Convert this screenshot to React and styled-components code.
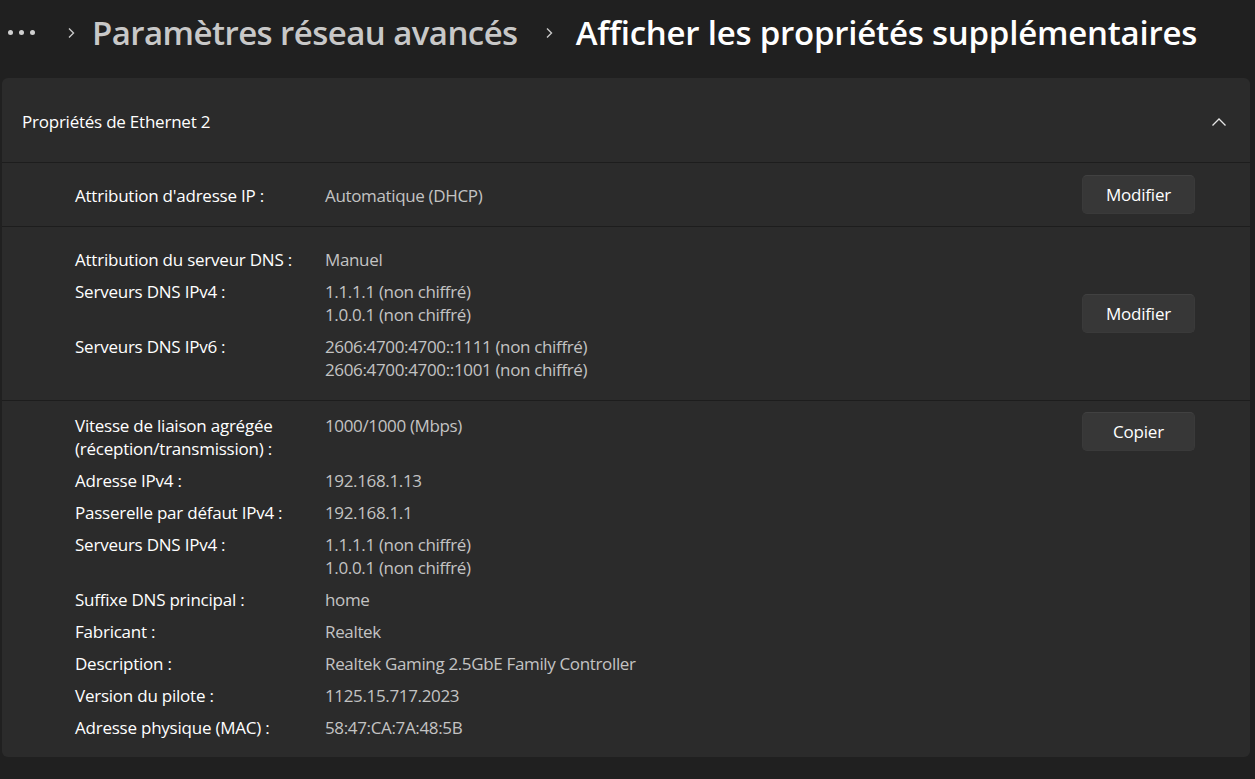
import React from "react";
import styled, { createGlobalStyle } from "styled-components";

const Global = createGlobalStyle`
  html, body { margin: 0; padding: 0; background: #202020; }
  body { font-family: "Open Sans", "Noto Sans", sans-serif; color: #ffffff; }
`;

const Page = styled.div`
  width: 1255px;
  height: 779px;
  background: #202020;
  overflow: hidden;
  display: flex;
  flex-direction: column;
`;

const Breadcrumb = styled.div`
  display: flex;
  align-items: center;
  height: 64px;
  padding: 0 0 0 8px;
  margin-bottom: 14px;
  box-sizing: border-box;
`;

const Dots = styled.div`
  display: flex;
  gap: 6px;
  align-items: center;
  margin-right: 26px;
  span {
    width: 5px;
    height: 5px;
    border-radius: 50%;
    background: #d0d0d0;
  }
`;

const Crumb = styled.span`
  font-size: 33px;
  font-weight: 600;
  letter-spacing: ${(p) => p.$ls}px;
  color: ${(p) => (p.$current ? "#ffffff" : "#c8c8c8")};
  white-space: nowrap;
`;

const Sep = styled.span`
  display: inline-flex;
  align-items: center;
  justify-content: center;
  width: 20px;
  margin: 2px ${(p) => p.$right}px 0 ${(p) => p.$left}px;
`;

const Card = styled.div`
  margin-left: 2px;
  width: 1248px;
  background: #2b2b2b;
  border-radius: 6px;
  display: flex;
  flex-direction: column;
`;

const Header = styled.div`
  height: 85px;
  box-sizing: border-box;
  display: flex;
  align-items: center;
  justify-content: space-between;
  padding: 3px 23px 0 20px;
  font-size: 17px;
  letter-spacing: -0.23px;
  border-bottom: 1px solid #1d1d1d;
`;

const Section = styled.div`
  display: flex;
  align-items: ${(p) => (p.$top ? "flex-start" : "center")};
  justify-content: space-between;
  padding: 0 55px 0 73px;
  border-bottom: ${(p) => (p.$last ? "none" : "1px solid #1d1d1d")};
`;

const Grid = styled.div`
  display: grid;
  grid-template-columns: 250px auto;
  row-gap: 9px;
  padding: ${(p) => p.$pad};
  font-size: 17px;
  line-height: 23px;
  letter-spacing: -0.23px;
`;

const Label = styled.div`
  color: #ffffff;
  width: 232px;
`;

const Value = styled.div`
  color: #c3c3c3;
  letter-spacing: -0.35px;
`;

const Button = styled.button`
  width: 113px;
  height: 39px;
  box-sizing: border-box;
  border-radius: 5px;
  background: #373737;
  border: 1px solid #3a3a3a;
  border-top-color: #414141;
  color: #ffffff;
  font-family: inherit;
  font-size: 17px;
  letter-spacing: -0.2px;
  flex-shrink: 0;
  padding: 0;
  margin-top: ${(p) => p.$mt || 0}px;
`;

const ChevronRight = () => (
  <svg width="10" height="14" viewBox="0 0 10 14">
    <path d="M3 2.5 L7.5 7 L3 11.5" fill="none" stroke="#c8c8c8" strokeWidth="1.4" />
  </svg>
);

const ChevronUp = () => (
  <svg width="16" height="10" viewBox="0 0 16 10">
    <path d="M1.5 8.5 L8 2 L14.5 8.5" fill="none" stroke="#e6e6e6" strokeWidth="1.3" />
  </svg>
);

const rows1 = [["Attribution d'adresse IP :", ["Automatique (DHCP)"]]];
const rows2 = [
  ["Attribution du serveur DNS :", ["Manuel"]],
  ["Serveurs DNS IPv4 :", ["1.1.1.1 (non chiffré)", "1.0.0.1 (non chiffré)"]],
  ["Serveurs DNS IPv6 :", ["2606:4700:4700::1111 (non chiffré)", "2606:4700:4700::1001 (non chiffré)"]],
];
const rows3 = [
  [["Vitesse de liaison agrégée", "(réception/transmission) :"], ["1000/1000 (Mbps)"]],
  ["Adresse IPv4 :", ["192.168.1.13"]],
  ["Passerelle par défaut IPv4 :", ["192.168.1.1"]],
  ["Serveurs DNS IPv4 :", ["1.1.1.1 (non chiffré)", "1.0.0.1 (non chiffré)"]],
  ["Suffixe DNS principal :", ["home"]],
  ["Fabricant :", ["Realtek"]],
  ["Description :", ["Realtek Gaming 2.5GbE Family Controller"]],
  ["Version du pilote :", ["1125.15.717.2023"]],
  ["Adresse physique (MAC) :", ["58:47:CA:7A:48:5B"]],
];

const Rows = ({ rows, pad }) => (
  <Grid $pad={pad}>
    {rows.map(([l, v], i) => (
      <React.Fragment key={i}>
        <Label>
          {Array.isArray(l) ? l.map((x, j) => <div key={j}>{x}</div>) : l}
        </Label>
        <Value>
          {v.map((x, j) => (
            <div key={j}>{x}</div>
          ))}
        </Value>
      </React.Fragment>
    ))}
  </Grid>
);

export default function App() {
  return (
    <Page>
      <Global />
      <Breadcrumb>
        <Dots>
          <span />
          <span />
          <span />
        </Dots>
        <Sep $left={0} $right={11}>
          <ChevronRight />
        </Sep>
        <Crumb $ls={-0.56}>Paramètres réseau avancés</Crumb>
        <Sep $left={21} $right={17}>
          <ChevronRight />
        </Sep>
        <Crumb $current $ls={-0.22}>
          Afficher les propriétés supplémentaires
        </Crumb>
      </Breadcrumb>
      <Card>
        <Header>
          <span>Propriétés de Ethernet 2</span>
          <ChevronUp />
        </Header>
        <Section>
          <Rows rows={rows1} pad="20.5px 0 19.5px" />
          <Button>Modifier</Button>
        </Section>
        <Section>
          <Rows rows={rows2} pad="20.5px 0 19.5px" />
          <Button>Modifier</Button>
        </Section>
        <Section $top $last>
          <Rows rows={rows3} pad="12.5px 0 18.5px" />
          <Button $mt={11}>Copier</Button>
        </Section>
      </Card>
    </Page>
  );
}
